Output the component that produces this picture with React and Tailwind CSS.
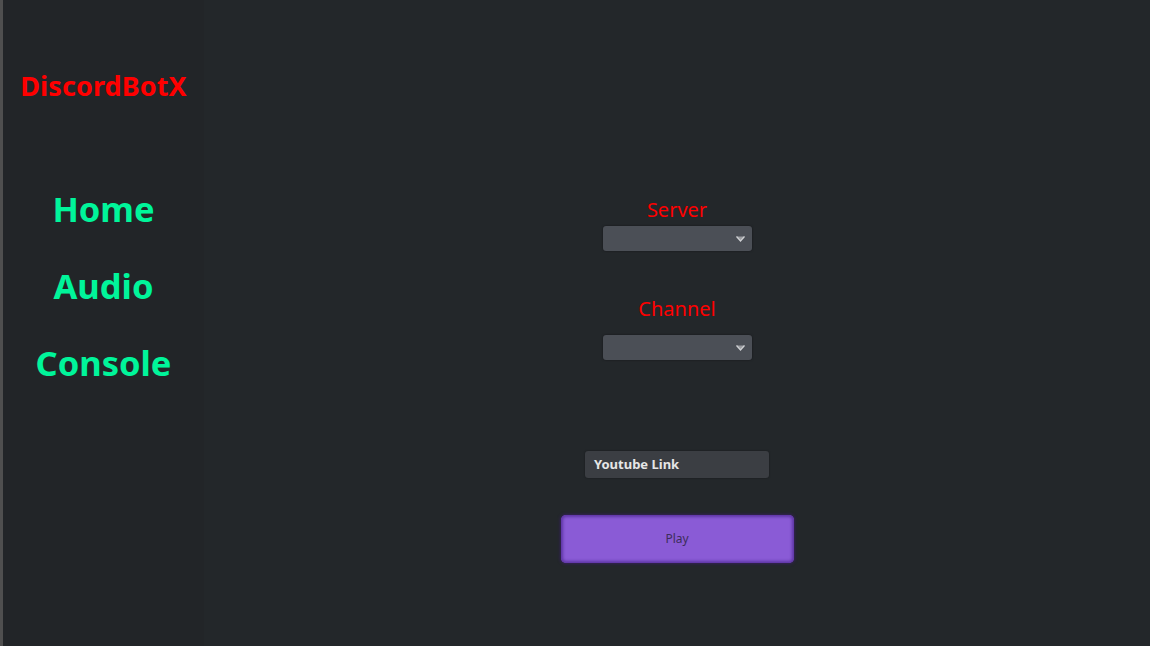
import React from 'react';

const Select = () => (
  <div className="relative w-[149px] h-[25px] rounded-[3px] bg-[#4b4f56] shadow-[0_0_2px_rgba(0,0,0,0.5)]">
    <svg className="absolute right-[7px] top-[10px]" width="9" height="6" viewBox="0 0 9 6">
      <path d="M0.5 0.5 L4.5 5 L8.5 0.5" fill="#9a9ca0" stroke="#d0d2d5" strokeWidth="1.2" />
    </svg>
  </div>
);

const App = () => {
  return (
    <div className="flex w-[1150px] h-[646px] bg-[#23272a] font-['Noto_Sans',sans-serif] overflow-hidden">
      {/* Sidebar */}
      <div className="w-[3px] bg-[#4f4f4f]" />
      <div className="w-[201px] bg-[#222528] flex flex-col items-center">
        <h1 className="mt-[68px] text-[27px] leading-[36px] font-bold text-[#ff0000] tracking-[0.1px]">DiscordBotX</h1>
        <nav className="mt-[82px] flex flex-col items-center gap-[32px]">
          {['Home', 'Audio', 'Console'].map((item) => (
            <a key={item} className="text-[34.5px] leading-[45px] font-bold text-[#00f59a]">
              {item}
            </a>
          ))}
        </nav>
      </div>

      {/* Main */}
      <div className="flex-1 flex flex-col items-center">
        <label className="mt-[196px] text-[20px] leading-[28px] text-[#ff0000]">Server</label>
        <div className="mt-[2px]"><Select /></div>
        <label className="mt-[44px] text-[20px] leading-[28px] text-[#ff0000]">Channel</label>
        <div className="mt-[12px]"><Select /></div>
        <div className="mt-[91px] w-[184px] h-[27px] rounded-[3px] bg-[#3b3e43] flex items-center px-[9px] shadow-[0_0_2px_rgba(0,0,0,0.4)]">
          <span className="text-[13px] font-bold text-[#e6e6e6]">Youtube Link</span>
        </div>
        <button className="mt-[37px] w-[233px] h-[48px] rounded-[5px] bg-[#8a5bd6] shadow-[inset_0_0_3px_2px_rgba(90,50,160,0.9),0_0_3px_1px_rgba(60,30,110,0.7)] text-[12px] text-[#3d2d5a]">
          Play
        </button>
      </div>
    </div>
  );
};

export default App;
